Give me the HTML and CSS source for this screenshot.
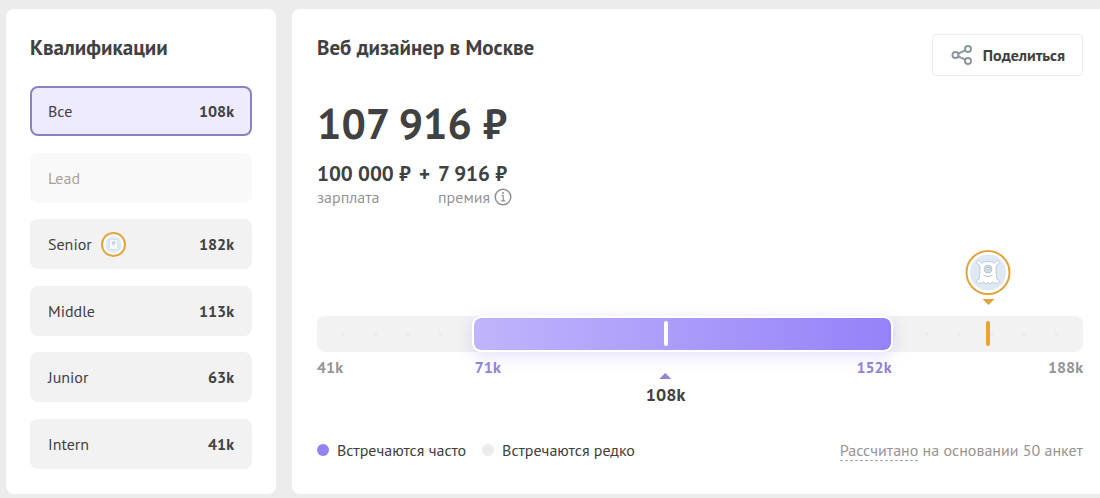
FILE: index.html
```
<!DOCTYPE html>
<html lang="ru">
<head>
    <meta charset="utf-8">
    <title>Веб дизайнер в Москве</title>
    <link rel="stylesheet" href="styles.css">
</head>
<body>
    <!-- Monster avatar, used in the list and on the scale -->
    <svg class="sprite" aria-hidden="true">
        <symbol id="monster" viewBox="0 0 38 38">
            <circle cx="19" cy="19" r="18.500" fill="#dfe8f5"/>
            <path d="M7.500 9c-.3-2.300 2.800-2.800 3.300-.8l1.900 1.300c2-1.300 4-1.800 6.300-1.800s4.300.5 6.300 1.800l1.900-1.300c.5-2 3.600-1.500 3.300.8-.2 1-1 1.500-1.900 1.500l-1.200 3c-.4 4.300.1 8.600 1 12.500 2.700.2 2.900 4.100.2 4.200h-3.200c-1.200 0-1.200-1.700-2-1.700s-.6 1.900-1.900 1.900h-1c-1.200 0-.8-1.500-1.500-1.500s-.3 1.500-1.500 1.500h-1c-1.300 0-1.100-1.900-1.900-1.900s-.8 1.700-2 1.700H9.400c-2.700-.1-2.500-4 .2-4.200.9-3.900 1.400-8.200 1-12.500l-1.200-3C8.500 10.500 7.700 10 7.500 9z" fill="#fff" stroke="#b9c6d8" stroke-width="1"/>
            <circle cx="19" cy="15.500" r="4" fill="#d5e0ee" stroke="#b4c0d1"/>
            <circle cx="19.500" cy="15" r="1.500" fill="#fff" stroke="#a6b4c8"/>
            <path d="M14.500 22q4.500 2.500 9 0" fill="none" stroke="#b4c0d1"/>
        </symbol>
    </svg>

    <div class="page">
        <aside class="card sidebar">
            <h2>Квалификации</h2>
            <div class="levels">
                <button class="level active" type="button"><span>Все</span><b>108k</b></button>
                <button class="level" type="button" disabled><span>Lead</span></button>
                <button class="level" type="button">
                    <span>Senior</span>
                    <svg class="avatar avatar-small" aria-hidden="true"><use href="#monster"/></svg>
                    <b>182k</b>
                </button>
                <button class="level" type="button"><span>Middle</span><b>113k</b></button>
                <button class="level" type="button"><span>Junior</span><b>63k</b></button>
                <button class="level" type="button"><span>Intern</span><b>41k</b></button>
            </div>
        </aside>

        <main class="card main">
            <header class="header">
                <h1>Веб дизайнер в Москве</h1>
                <button class="share" type="button">
                    <svg width="22" height="22" viewBox="0 0 22 22" fill="none" stroke="#8b979d" stroke-width="2" aria-hidden="true">
                        <circle cx="4.500" cy="11" r="3"/>
                        <circle cx="17" cy="5" r="3"/>
                        <circle cx="17" cy="17" r="3"/>
                        <path d="M7.200 9.700l7.100-3.400M7.200 12.300l7.100 3.400"/>
                    </svg>
                    Поделиться
                </button>
            </header>

            <div class="total">107 916 ₽</div>

            <div class="parts">
                <div class="part"><b>100 000 ₽</b><span>зарплата</span></div>
                <b class="plus">+</b>
                <div class="part">
                    <b>7 916 ₽</b>
                    <span>премия
                        <svg width="18" height="18" viewBox="0 0 18 18" fill="none" stroke="#8f8f8f" aria-hidden="true">
                            <circle cx="9" cy="9" r="7.800" stroke-width="1.500"/>
                            <path d="M7.500 7.500h1.700v5M7.200 12.800h4" stroke-width="1.200"/>
                            <circle cx="9" cy="5" r=".6" fill="#8f8f8f"/>
                        </svg>
                    </span>
                </div>
            </div>

            <section class="chart">
                <div class="scale">
                    <div class="range" style="left: 20.3%; right: 24.8%"></div>
                    <div class="mark" style="left: 45.5%"></div>
                    <div class="mark mark-own" style="left: 87.6%"></div>
                    <div class="pin" style="left: 87.6%">
                        <svg class="avatar" aria-hidden="true"><use href="#monster"/></svg>
                    </div>
                    <span class="value" style="left: 20.6%">71k</span>
                    <span class="value" style="right: 25%">152k</span>
                    <b class="median" style="left: 45.5%">108k</b>
                </div>
                <div class="limits"><span>41k</span><span>188k</span></div>
            </section>

            <footer class="footer">
                <span class="legend often">Встречаются часто</span>
                <span class="legend">Встречаются редко</span>
                <span class="note"><a href="#">Рассчитано</a> на основании 50 анкет</span>
            </footer>
        </main>
    </div>
</body>
</html>
```
FILE: styles.css
```
/* Global styles */
* {
    box-sizing: border-box;
}

body {
    font-family: 'PT Sans', 'Noto Sans', sans-serif;
    font-size: 16px;
    line-height: 20px;
    background-color: #ececec;
    color: #414141;
    margin: 0;
}

h1,
h2 {
    font-size: 21px;
    line-height: 28px;
    margin: 0;
}

button {
    font: inherit;
    color: inherit;
    cursor: pointer;
}

.sprite {
    position: absolute;
    width: 0;
    height: 0;
}

.page {
    display: flex;
    gap: 16px;
    min-height: 100vh;
    padding: 9px 0 4px 6px;
}

.card {
    display: flex;
    flex-direction: column;
    background-color: #fff;
    border-radius: 8px;
    padding: 25px 24px;
}

/* Qualification list */
.sidebar {
    flex: 0 0 270px;
}

.levels {
    flex: 1;
    display: flex;
    flex-direction: column;
    justify-content: space-between;
    gap: 12px;
    margin-top: 24px;
}

.level {
    display: flex;
    align-items: center;
    height: 50px;
    padding: 0 16px;
    background-color: #f2f2f2;
    border: 2px solid #f2f2f2;
    border-radius: 8px;
}

.level b {
    margin-left: auto;
}

.level.active {
    background-color: #efebfe;
    border-color: #8d7fc2;
}

.level:disabled {
    background-color: #f9f9f9;
    border-color: #f9f9f9;
    color: #a3a3a3;
    cursor: default;
}

.avatar {
    display: block;
    width: 45px;
    height: 45px;
    padding: 2px;
    background-color: #fff;
    border: 2px solid #e3a33b;
    border-radius: 50%;
}

.avatar-small {
    width: 25px;
    height: 25px;
    margin-left: 9px;
}

/* Salary card */
.main {
    flex: 1;
    border-radius: 8px 0 0 8px;
    padding-left: 25px;
    padding-right: 17px;
}

.header {
    display: flex;
    justify-content: space-between;
    align-items: flex-start;
}

.share {
    display: flex;
    align-items: center;
    gap: 10px;
    height: 42px;
    padding: 0 17px 0 18px;
    background-color: #fff;
    border: 1px solid #ececec;
    border-radius: 4px;
    font-weight: bold;
}

.total {
    font-size: 43px;
    line-height: 60px;
    font-weight: bold;
    margin-top: 17px;
}

.parts {
    display: flex;
    gap: 8px;
    margin-top: 8px;
}

.parts b {
    font-size: 21px;
    line-height: 26px;
}

.part {
    display: flex;
    flex-direction: column;
}

.part span {
    display: flex;
    align-items: center;
    gap: 4px;
    color: #959595;
}

/* Scale */
.chart {
    margin-top: 109px;
}

.scale {
    position: relative;
    height: 36px;
    padding: 0 10px;
    border-radius: 8px;
    background: radial-gradient(circle, #e8e8e8 1px, transparent 2px) 0 0 / 32px 36px round content-box content-box, #f2f2f2;
}

.range {
    position: absolute;
    top: 0;
    bottom: 0;
    border: 2px solid #fff;
    border-radius: 9px;
    background: linear-gradient(90deg, #c0b4fb, #9582f9) padding-box;
    box-shadow: 0 4px 16px rgba(149, 130, 249, 0.25);
}

.mark {
    position: absolute;
    top: 5px;
    bottom: 6px;
    width: 4px;
    border-radius: 2px;
    background-color: #fff;
    transform: translateX(-50%);
}

.mark-own {
    background-color: #eaa42f;
}

.pin {
    position: absolute;
    bottom: 100%;
    padding-bottom: 21px;
    transform: translateX(-50%);
}

.pin::after,
.median::before {
    content: '';
    position: absolute;
    left: 50%;
    border: 6px solid transparent;
    transform: translateX(-50%);
}

.pin::after {
    bottom: 11px;
    border-top-color: #e3a33b;
    border-bottom-width: 0;
}

.value {
    position: absolute;
    top: 41px;
    color: #9182d6;
    font-weight: bold;
}

.median {
    position: absolute;
    top: 69px;
    font-size: 18px;
    transform: translateX(-50%);
}

.median::before {
    bottom: 26px;
    border-top-width: 0;
    border-bottom-color: #9182d6;
}

.limits {
    display: flex;
    justify-content: space-between;
    margin-top: 5px;
    color: #959595;
    font-weight: bold;
}

/* Legend */
.footer {
    display: flex;
    align-items: center;
    gap: 16px;
    margin-top: 63px;
}

.legend {
    display: flex;
    align-items: center;
    gap: 8px;
}

.legend::before {
    content: '';
    width: 12px;
    height: 12px;
    border-radius: 50%;
    background-color: #ececec;
}

.often::before {
    background-color: #9582f0;
}

.note {
    margin-left: auto;
    color: #959595;
}

.note a {
    color: inherit;
    text-decoration: none;
    border-bottom: 1px dashed #a8a8a8;
}
```
